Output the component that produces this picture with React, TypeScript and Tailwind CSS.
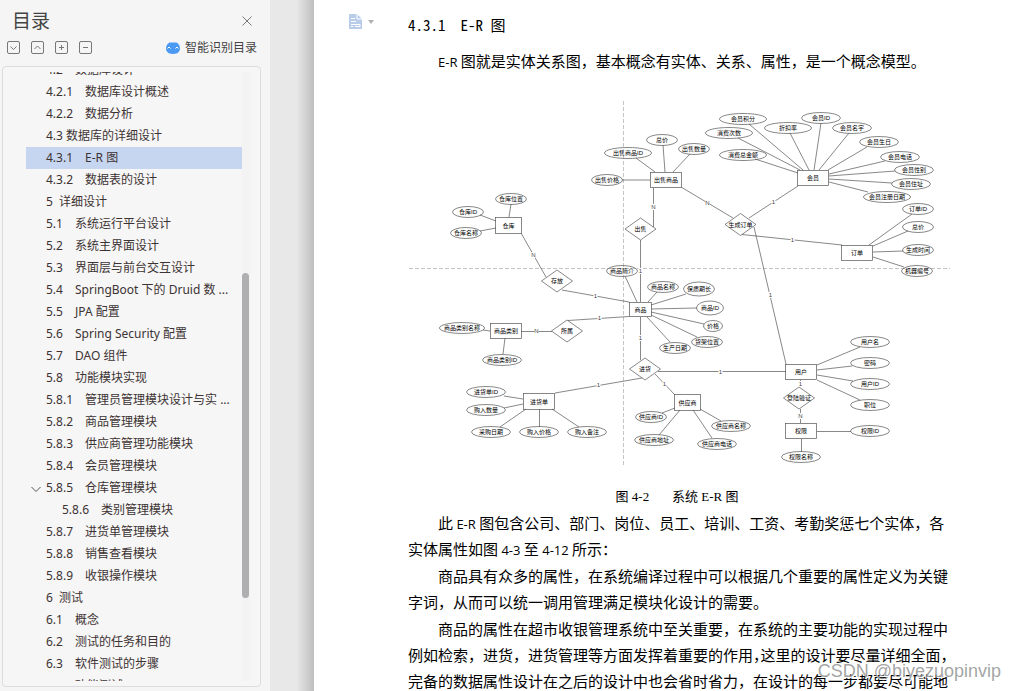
import { ReactNode } from 'react'

interface OutlineItem {
  no: string
  title: string
  gap?: string
  pad?: string
  active?: boolean
  open?: boolean
}

const outline: OutlineItem[] = [
  { no: '4.2', title: '数据库设计' },
  { no: '4.2.1', title: '数据库设计概述' },
  { no: '4.2.2', title: '数据分析' },
  { no: '4.3', title: '数据库的详细设计', gap: 'gap-[3px]' },
  { no: '4.3.1', title: 'E-R 图', active: true },
  { no: '4.3.2', title: '数据表的设计' },
  { no: '5', title: '详细设计', gap: 'gap-1.5' },
  { no: '5.1', title: '系统运行平台设计' },
  { no: '5.2', title: '系统主界面设计' },
  { no: '5.3', title: '界面层与前台交互设计' },
  { no: '5.4', title: 'SpringBoot 下的 Druid 数 ...' },
  { no: '5.5', title: 'JPA 配置' },
  { no: '5.6', title: 'Spring Security 配置' },
  { no: '5.7', title: 'DAO 组件' },
  { no: '5.8', title: '功能模块实现' },
  { no: '5.8.1', title: '管理员管理模块设计与实 ...' },
  { no: '5.8.2', title: '商品管理模块' },
  { no: '5.8.3', title: '供应商管理功能模块' },
  { no: '5.8.4', title: '会员管理模块' },
  { no: '5.8.5', title: '仓库管理模块', open: true },
  { no: '5.8.6', title: '类别管理模块', pad: 'pl-9' },
  { no: '5.8.7', title: '进货单管理模块' },
  { no: '5.8.8', title: '销售查看模块' },
  { no: '5.8.9', title: '收银操作模块' },
  { no: '6', title: '测试', gap: 'gap-1.5' },
  { no: '6.1', title: '概念' },
  { no: '6.2', title: '测试的任务和目的' },
  { no: '6.3', title: '软件测试的步骤' },
  { no: '6.4', title: '功能测试' },
]

// name, cx, cy, rx, ry
type Attr = [string, number, number, number, number?]
const attrs: Attr[] = [
  ['总价', 662, 140, 15],
  ['出售商品ID', 628, 153, 23],
  ['出售价格', 607, 180, 15],
  ['出售数量', 694, 149, 15],
  ['仓库位置', 511, 199, 15],
  ['仓库ID', 468, 212, 15],
  ['仓库名称', 466, 233, 15],
  ['会员积分', 743, 119, 23],
  ['消费次数', 729, 133, 23],
  ['消费总金额', 743, 155, 23],
  ['折扣率', 788, 128, 23],
  ['会员ID', 821, 118, 19],
  ['会员名字', 852, 128, 19],
  ['会员生日', 879, 142, 19],
  ['会员电话', 900, 157, 19],
  ['会员性别', 914, 170, 19],
  ['会员住址', 911, 184, 19],
  ['会员注册日期', 887, 197, 23],
  ['订单ID', 918, 209, 15],
  ['总价', 918, 227, 15],
  ['生成时间', 918, 250, 15],
  ['机器编号', 917, 271, 15],
  ['商品简介', 622, 271, 15],
  ['商品名称', 663, 287, 15],
  ['保质期长', 699, 289, 15, 7],
  ['商品ID', 710, 308, 13, 7],
  ['价格', 713, 326, 9],
  ['货架位置', 707, 342, 15],
  ['生产日期', 675, 348, 15],
  ['商品类别名称', 462, 328, 22],
  ['商品类别ID', 502, 360, 19],
  ['进货单ID', 486, 392, 19],
  ['购入数量', 486, 410, 19],
  ['采购日期', 491, 432, 19],
  ['购入价格', 539, 432, 19],
  ['购入备注', 587, 432, 19],
  ['供应商ID', 651, 417, 15],
  ['供应商地址', 654, 440, 19],
  ['供应商名称', 731, 426, 19],
  ['供应商电话', 717, 444, 19],
  ['用户名', 870, 342, 19],
  ['密码', 870, 363, 19],
  ['用户ID', 870, 384, 19],
  ['职位', 870, 405, 19],
  ['权限ID', 870, 431, 19],
  ['权限名称', 801, 457, 19],
]

// name, x, y, width, height
const entities: [string, number, number, number, number][] = [
  ['出售商品', 650.5, 172.5, 31, 15],
  ['仓库', 495.5, 217.5, 26, 16],
  ['会员', 797.5, 170.5, 31, 15],
  ['订单', 841.5, 245.5, 31, 15],
  ['商品', 629.5, 302.5, 22, 14],
  ['商品类别', 490.5, 323.5, 31, 15],
  ['进货单', 523.5, 393.5, 31, 16],
  ['供应商', 674.5, 394.5, 26, 16],
  ['用户', 785.5, 364.5, 31, 15],
  ['权限', 785.5, 423.5, 31, 15],
]

const relations: [string, number, number][] = [
  ['出售', 640.5, 229],
  ['生成订单', 740.5, 224.5],
  ['存放', 557, 281],
  ['所属', 567, 331],
  ['进货', 645, 369],
  ['登陆验证', 799, 398],
]

const links: [number, number, number, number][] = [
  [663, 145, 665, 172],
  [636, 158, 655, 172],
  [622, 180, 650, 180],
  [690, 154, 673, 172],
  [511, 204, 509, 217],
  [480, 215, 496, 221],
  [480, 231, 496, 228],
  [749, 124, 803, 170],
  [738, 138, 800, 170],
  [755, 159, 798, 173],
  [790, 133, 809, 170],
  [821, 123, 814, 170],
  [849, 133, 819, 170],
  [867, 147, 828, 170],
  [885, 161, 829, 174],
  [895, 171, 829, 176],
  [892, 183, 829, 179],
  [868, 192, 829, 182],
  [912, 214, 869, 245],
  [908, 231, 873, 246],
  [903, 251, 873, 252],
  [904, 267, 873, 257],
  [625, 276, 637, 302],
  [657, 292, 648, 302],
  [686, 294, 651, 305],
  [697, 308, 651, 309],
  [704, 324, 651, 312],
  [697, 337, 651, 315],
  [670, 342, 647, 317],
  [483, 330, 490, 331],
  [503, 354, 505, 338],
  [504, 396, 523, 399],
  [504, 408, 523, 404],
  [500, 427, 526, 409],
  [539.5, 427, 539.5, 409],
  [579, 427, 552, 409],
  [662, 413, 675, 408],
  [659, 435, 680, 410],
  [721, 421, 700, 409],
  [712, 438, 693, 410],
  [860, 347, 817, 365],
  [852, 366, 817, 370],
  [853, 381, 817, 375],
  [860, 400, 817, 380],
  [851, 431.5, 817, 431.5],
  [801.5, 452, 801.5, 439],
]

// x1, y1, x2, y2, cardinality and where it sits
const roles: [number, number, number, number, string, number, number][] = [
  [653.5, 188, 653.5, 227, 'N', 653, 207],
  [681, 187, 733, 218, 'N', 707, 203],
  [798, 186, 749, 218, '1', 773, 202],
  [742, 234.5, 842, 245, '1', 792, 240],
  [754, 227, 786, 364, '1', 770, 295],
  [640.5, 240, 640.5, 302, '1', 640, 271],
  [521, 233, 546, 277, 'N', 533, 255],
  [562, 290, 629, 302, '1', 595, 296],
  [521, 331.5, 552, 331.5, 'N', 536, 331],
  [568, 320.5, 629, 316.5, '1', 599, 318],
  [640.5, 317, 640.5, 360, '1', 640, 338],
  [642, 378, 555, 393, '1', 598, 385],
  [658, 371.5, 786, 371.5, '1', 720, 372],
  [655, 374, 675, 395, '1', 664, 384],
  [800.5, 380, 800.5, 387, '1', 800, 384],
  [800.5, 409, 800.5, 423, 'N', 800, 416],
]

function ErDiagram() {
  return (
    <svg viewBox="408 96 544 374" className="block h-[374px] w-[544px]" role="img" aria-label="系统 E-R 图">
      <g stroke="#c4c4c4" strokeDasharray="4 2">
        <path d="M623.5 101V465" />
        <path d="M409 268.5H950" />
      </g>
      <g fill="none" stroke="#555" strokeWidth="0.7">
        {links.map(([x1, y1, x2, y2], i) => (
          <line key={i} x1={x1} y1={y1} x2={x2} y2={y2} />
        ))}
        {roles.map(([x1, y1, x2, y2], i) => (
          <line key={i} x1={x1} y1={y1} x2={x2} y2={y2} />
        ))}
        {attrs.map(([, cx, cy, rx, ry = 5.5], i) => (
          <ellipse key={i} cx={cx} cy={cy} rx={rx + 0.5} ry={ry} />
        ))}
        {entities.map(([name, x, y, w, h]) => (
          <rect key={name} x={x} y={y} width={w} height={h} />
        ))}
        {relations.map(([name, x, y]) => (
          <path key={name} d={`M${x - 15.5} ${y}L${x} ${y - 11}L${x + 15.5} ${y}L${x} ${y + 11}Z`} />
        ))}
      </g>
      <g
        className="font-['Liberation_Sans','Noto_Sans_CJK_SC',sans-serif] text-[6px]"
        fill="#000"
        textAnchor="middle"
      >
        {attrs.map(([name, x, y], i) => (
          <text key={i} x={x} y={y + 2}>{name}</text>
        ))}
        {entities.map(([name, x, y, w, h]) => (
          <text key={name} x={x + w / 2} y={y + h / 2 + 2}>{name}</text>
        ))}
        {relations.map(([name, x, y]) => (
          <text key={name} x={x} y={y + 2}>{name}</text>
        ))}
        {roles.map(([, , , , label, x, y], i) => (
          <g key={i}>
            <rect x={x - 1.5} y={y - 3} width="4" height="6" fill="#fff" />
            <text x={x + 0.5} y={y + 2} fill="#444">{label}</text>
          </g>
        ))}
      </g>
    </svg>
  )
}

const tools = [
  { label: '全部展开', d: 'M3.5 5.5L6.5 8.5L9.5 5.5' },
  { label: '全部收起', d: 'M3.5 8L6.5 5L9.5 8' },
  { label: '展开一级', d: 'M4 6.5H9M6.5 4V9' },
  { label: '收起一级', d: 'M4 6.5H9' },
]

function Sidebar() {
  return (
    <aside className="flex w-[270px] shrink-0 flex-col bg-[#f5f5f5] pr-[9px] pb-1 pl-0.5 font-['Noto_Sans','Noto_Sans_CJK_SC',sans-serif] text-xs text-[#3d3333]">
      <div className="flex h-10 items-center justify-between pt-0.5 pr-1.5 pl-2.5">
        <h1 className="text-[19px] leading-6 text-[#444]">目录</h1>
        <button type="button" aria-label="关闭" className="p-0.5">
          <svg className="size-3" viewBox="0 0 12 12" stroke="#777" fill="none">
            <path d="M1.5 1.5L10.5 10.5M10.5 1.5L1.5 10.5" />
          </svg>
        </button>
      </div>
      <div className="flex h-[26px] items-start pr-1 pl-[5px]">
        <div className="flex gap-[11px] pt-px">
          {tools.map((tool) => (
            <button key={tool.label} type="button" aria-label={tool.label}>
              <svg className="block size-[13px]" viewBox="0 0 13 13" stroke="#777" fill="none">
                <rect x="0.5" y="0.5" width="12" height="12" rx="1.5" />
                <path d={tool.d} />
              </svg>
            </button>
          ))}
        </div>
        <button type="button" className="ml-auto flex items-center gap-[5px] leading-4 text-[#444]">
          <svg className="h-3 w-3.5" viewBox="0 0 14 12">
            <path
              d="M3.5 0.5H10.5C12.5 1.5 14 3.5 14 6.5C14 9 12.5 10.5 10.5 11.5C8.5 12.1 5.5 12.1 3.5 11.5C1.5 10.5 0 9 0 6.5C0 3.5 1.5 1.5 3.5 0.5Z"
              fill="#4b9bf5"
            />
            <path d="M1.5 6.5L3 5L4.5 6.5M9.5 6.5L11 5L12.5 6.5" stroke="#fff" fill="none" />
          </svg>
          智能识别目录
        </button>
      </div>
      <nav className="flex min-h-0 flex-1 rounded border border-[#dcdcdc] bg-[#f6f6f6] py-[5px] pr-2.5 pl-[23px]">
        <ul className="min-w-0 flex-1 overflow-hidden">
          {outline.map((item, i) => (
            <li key={item.no} className={i === 0 ? '-mt-[13px]' : ''}>
              <a
                href={`#s${item.no}`}
                className={`relative flex h-[22px] items-center whitespace-nowrap ${item.pad ?? 'pl-5'} ${item.gap ?? 'gap-3'} ${item.active ? 'bg-[#c7d6f0]' : ''}`}
              >
                {item.open && (
                  <svg className="absolute left-1 top-1.5 size-3" viewBox="0 0 12 12" stroke="#555" fill="none">
                    <path d="M1.5 4L6 8.5L10.5 4" />
                  </svg>
                )}
                <span>{item.no}</span>
                <span>{item.title}</span>
              </a>
            </li>
          ))}
        </ul>
        <div className="flex w-2 flex-col bg-[#f3f3f3]">
          <div className="grow-[201]" />
          <div className="w-[7px] grow-[326] rounded-full bg-[#afafb1]" />
          <div className="grow-[83]" />
        </div>
      </nav>
    </aside>
  )
}

function Latin({ children }: { children: ReactNode }) {
  return <span className="font-['Open_Sans',sans-serif] text-[13px] leading-none">{children}</span>
}

function Half({ children }: { children: ReactNode }) {
  return <span className="[font-feature-settings:'halt']">{children}</span>
}

function DocumentPage() {
  return (
    <main className="relative min-w-0 flex-1 overflow-hidden bg-white font-['Noto_Sans_CJK_SC',sans-serif] text-[15px] leading-[26px] whitespace-nowrap text-black">
      <div className="flex items-start pt-3 pl-[35px]">
        <button type="button" aria-label="段落布局" className="flex w-[59px] items-center gap-1.5 pt-0.5">
          <svg className="h-4 w-[13px]" viewBox="0 0 13 16">
            <path d="M0 0H8L13 5V15H0Z" fill="#b9cdea" />
            <path d="M8 0V5H13M2 4.5H6M2 7.5H7M2 10.5H11V12.5H6M2 12.5H4" stroke="#fff" fill="none" />
          </svg>
          <svg className="h-1 w-1.5" viewBox="0 0 6 4">
            <path d="M0 0H6L3 4Z" fill="#b0b0b0" />
          </svg>
        </button>
        <h2 className="whitespace-pre [font-feature-settings:'hwid']">4.3.1  E-R 图</h2>
      </div>
      <article className="w-[632px] pt-2.5 pl-[94px]">
        <p className="indent-[30px]"><Latin>E-R </Latin>图就是实体关系图，基本概念有实体、关系、属性，是一个概念模型。</p>
        <figure className="pt-[22px]">
          <ErDiagram />
          <figcaption className="pt-3.5 text-center font-['Liberation_Serif','Noto_Sans_CJK_SC',serif] text-[13px] whitespace-pre">
            图 4-2       系统 E-R 图
          </figcaption>
        </figure>
        <div className="space-y-px">
          <p className="indent-[30px]">
            此<Latin> E-R </Latin>图包含公司、部门、岗位、员工、培训、工资、考勤奖惩七个实体，各
            <br />
            实体属性如图<Latin> 4-3 </Latin>至<Latin> 4-12 </Latin>所示：
          </p>
          <p className="indent-[30px]">
            商品具有众多的属性，在系统编译过程中可以根据几个重要的属性定义为关键
            <br />
            字词，从而可以统一调用管理满足模块化设计的需要。
          </p>
          <p className="indent-[30px]">
            商品的属性在超市收银管理系统中至关重要，在系统的主要功能的实现过程中
            <br />
            例如检索，进货，进货管理等方面发挥着重要的作用<Half>，</Half>这里的设计要尽量详细全面<Half>，</Half>
            <br />
            完备的数据属性设计在之后的设计中也会省时省力，在设计的每一步都要尽可能地
          </p>
        </div>
      </article>
      <div className="absolute right-3.5 bottom-2 font-['Liberation_Sans',sans-serif] text-lg leading-6 text-[#8c8c8c]/80 [text-shadow:1px_1px_0_#fff]">
        CSDN @biyezuopinvip
      </div>
    </main>
  )
}

export default function App() {
  return (
    <div className="flex h-screen overflow-hidden bg-[#e8e8e8]">
      <Sidebar />
      <div className="w-11 shrink-0 bg-linear-to-r from-[#e8e8e8] from-60% to-[#bebebe]" />
      <DocumentPage />
    </div>
  )
}
